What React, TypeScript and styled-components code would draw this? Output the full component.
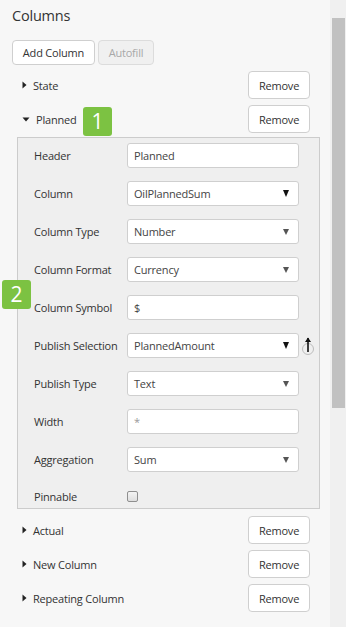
import React from "react";
import styled, { createGlobalStyle } from "styled-components";

const GlobalStyle = createGlobalStyle`
  html, body { margin: 0; padding: 0; background: #f7f7f7; }
  body { font-family: "Open Sans", "Noto Sans", Arial, sans-serif; color: #333; }
  * { box-sizing: border-box; }
`;

const Page = styled.div`
  position: relative;
  display: flex;
  width: 346px;
  height: 627px;
  overflow: hidden;
  background: #f7f7f7;
`;

const Main = styled.div`
  width: 330px;
  padding-left: 12px;
  display: flex;
  flex-direction: column;
`;

const Title = styled.div`
  height: 32px;
  line-height: 32px;
  font-size: 14.5px;
  letter-spacing: -0.2px;
  color: #333;
`;

const Toolbar = styled.div`
  display: flex;
  gap: 3px;
  margin-top: 8px;
`;

const ToolButton = styled.button<{ $disabled?: boolean }>`
  height: 25px;
  width: ${(p) => (p.$disabled ? "56px" : "83px")};
  padding: 0;
  font-family: inherit;
  font-size: 11px;
  letter-spacing: -0.2px;
  border-radius: 4px;
  border: 1px solid ${(p) => (p.$disabled ? "#dcdcdc" : "#cfcfcf")};
  background: ${(p) => (p.$disabled ? "#f0f0f0" : "#fff")};
  color: ${(p) => (p.$disabled ? "#a8a8a8" : "#333")};
`;

const List = styled.div`
  display: flex;
  flex-direction: column;
  gap: 6px;
  margin-top: 6px;
`;

const Item = styled.div`
  display: flex;
  flex-direction: column;
`;

const Row = styled.div`
  display: flex;
  align-items: center;
  justify-content: space-between;
  height: 28px;
  padding: 0 20px 0 10px;
`;

const RowTitle = styled.div`
  display: flex;
  align-items: center;
  gap: 6px;
  font-size: 11px;
  letter-spacing: -0.2px;
  color: #333;
`;

const RemoveButton = styled.button`
  width: 62px;
  height: 28px;
  padding: 0;
  font-family: inherit;
  font-size: 11px;
  letter-spacing: -0.2px;
  color: #333;
  background: #fff;
  border: 1px solid #cfcfcf;
  border-radius: 4px;
`;

const Panel = styled.div`
  margin: 4px 10px 1px 5px;
  border: 1px solid #cccccc;
  background: #efefef;
  display: grid;
  grid-template-columns: 93px 172px 1fr;
  row-gap: 13px;
  align-items: center;
  padding: 5px 0 1px 16px;
`;

const Label = styled.div`
  font-size: 11px;
  letter-spacing: -0.2px;
  color: #333;
  white-space: nowrap;
`;

const Field = styled.div<{ $placeholder?: boolean }>`
  height: 25px;
  background: #fff;
  border: 1px solid #cfcfcf;
  border-radius: 3px;
  display: flex;
  align-items: center;
  justify-content: space-between;
  padding: 0 6px 0 6px;
  font-size: 11px;
  letter-spacing: -0.2px;
  color: ${(p) => (p.$placeholder ? "#999" : "#444")};
`;

const Caret = styled.span<{ $dark?: boolean }>`
  width: 0;
  height: 0;
  border-left: ${(p) => (p.$dark ? "3.5px" : "3px")} solid transparent;
  border-right: ${(p) => (p.$dark ? "3.5px" : "3px")} solid transparent;
  border-top: ${(p) => (p.$dark ? "7px" : "6px")} solid ${(p) => (p.$dark ? "#111" : "#555")};
  margin-right: 3px;
`;

const Extra = styled.div`
  display: flex;
  align-items: center;
  padding-left: 2px;
`;

const CheckboxBox = styled.span`
  width: 11px;
  height: 11px;
  border: 1px solid #8f8f8f;
  border-radius: 2px;
  background: linear-gradient(#f4f4f4, #dedede);
  display: block;
`;

const CheckRow = styled.div`
  height: 22px;
  display: flex;
  align-items: center;
`;

const Badge = styled.div<{ $top: number; $left: number }>`
  position: absolute;
  top: ${(p) => p.$top}px;
  left: ${(p) => p.$left}px;
  width: 29px;
  height: 29px;
  background: #7cc242;
  border-radius: 3px;
  color: #fff;
  font-size: 21px;
  line-height: 29px;
  text-align: center;
  font-family: "Open Sans", Arial, sans-serif;
`;

const ScrollTrack = styled.div`
  width: 16px;
  height: 100%;
  background: #f0f0f0;
  padding: 18px 1px 0 2px;
`;

const ScrollThumb = styled.div`
  height: 390px;
  background: #c1c1c1;
`;

const TriRight = () => (
  <svg width="5" height="8" viewBox="0 0 5 8">
    <path d="M0.5 0.5 L4.5 4 L0.5 7.5 Z" fill="#222" />
  </svg>
);

const TriDown = () => (
  <svg width="8" height="5" viewBox="0 0 8 5">
    <path d="M0.5 0.5 L7.5 0.5 L4 4.5 Z" fill="#222" />
  </svg>
);

const UpIcon = () => (
  <svg width="14" height="22" viewBox="0 0 14 22">
    <circle cx="7" cy="14" r="5.5" fill="none" stroke="#bdbdbd" strokeWidth="1" />
    <path d="M7 3 L7 17" stroke="#111" strokeWidth="1.6" />
    <path d="M4 7 L7 2.5 L10 7 Z" fill="#111" />
  </svg>
);

type FieldDef = {
  label: string;
  value: string;
  select?: boolean;
  dark?: boolean;
  extra?: boolean;
  placeholder?: boolean;
};

const fields: FieldDef[] = [
  { label: "Header", value: "Planned" },
  { label: "Column", value: "OilPlannedSum", select: true, dark: true },
  { label: "Column Type", value: "Number", select: true },
  { label: "Column Format", value: "Currency", select: true },
  { label: "Column Symbol", value: "$" },
  { label: "Publish Selection", value: "PlannedAmount", select: true, dark: true, extra: true },
  { label: "Publish Type", value: "Text", select: true },
  { label: "Width", value: "*", placeholder: true },
  { label: "Aggregation", value: "Sum", select: true },
];

const CollapsedRow = ({ name }: { name: string }) => (
  <Row>
    <RowTitle>
      <TriRight />
      {name}
    </RowTitle>
    <RemoveButton>Remove</RemoveButton>
  </Row>
);

export default function App() {
  return (
    <Page>
      <GlobalStyle />
      <Main>
        <Title>Columns</Title>
        <Toolbar>
          <ToolButton>Add Column</ToolButton>
          <ToolButton $disabled>Autofill</ToolButton>
        </Toolbar>
        <List>
          <CollapsedRow name="State" />
          <Item>
            <Row>
              <RowTitle>
                <TriDown />
                Planned
              </RowTitle>
              <RemoveButton>Remove</RemoveButton>
            </Row>
            <Panel>
              {fields.map((f) => (
                <React.Fragment key={f.label}>
                  <Label>{f.label}</Label>
                  <Field $placeholder={f.placeholder}>
                    <span>{f.value}</span>
                    {f.select && <Caret $dark={f.dark} />}
                  </Field>
                  <Extra>{f.extra ? <UpIcon /> : null}</Extra>
                </React.Fragment>
              ))}
              <Label>Pinnable</Label>
              <CheckRow>
                <CheckboxBox />
              </CheckRow>
              <Extra />
            </Panel>
          </Item>
          <CollapsedRow name="Actual" />
          <CollapsedRow name="New Column" />
          <CollapsedRow name="Repeating Column" />
        </List>
      </Main>
      <ScrollTrack>
        <ScrollThumb />
      </ScrollTrack>
      <Badge $top={107} $left={83}>1</Badge>
      <Badge $top={280} $left={2}>2</Badge>
    </Page>
  );
}
